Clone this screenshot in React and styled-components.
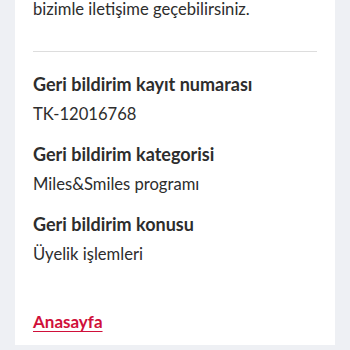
import React from 'react'
import styled, { createGlobalStyle } from 'styled-components'

const Global = createGlobalStyle`
  html, body {
    margin: 0;
    height: 100%;
    overflow: hidden;
    background: #eef0f4;
    font-family: 'Lato', 'Noto Sans', sans-serif;
    color: #2d2d2d;
  }
`

const Card = styled.div`
  margin: 0 15px;
  background: #ffffff;
  padding: 0 18px;
  height: 100vh;
  box-sizing: border-box;
`

const Intro = styled.p`
  margin: -5px 0 0;
  font-size: 16.6px;
  line-height: 28px;
  padding-bottom: 28px;
  border-bottom: 1px solid #dddddd;
`

const List = styled.dl`
  margin: 17px 0 0;
`

const Label = styled.dt`
  font-size: 18px;
  font-weight: 700;
  line-height: 30px;
  margin-top: 10px;
`

const Value = styled.dd`
  margin: 0;
  font-size: 16.6px;
  line-height: 30px;
`

const Link = styled.a`
  display: inline-block;
  margin-top: 42px;
  font-size: 17px;
  font-weight: 700;
  color: #d0103a;
  text-decoration: underline;
  text-underline-offset: 3px;
`

const items = [
  ['Geri bildirim kayıt numarası', 'TK-12016768'],
  ['Geri bildirim kategorisi', 'Miles&Smiles programı'],
  ['Geri bildirim konusu', 'Üyelik işlemleri'],
]

export default function App() {
  return (
    <>
      <Global />
      <Card>
        <Intro>bizimle iletişime geçebilirsiniz.</Intro>
        <List>
          {items.map(([label, value]) => (
            <React.Fragment key={label}>
              <Label>{label}</Label>
              <Value>{value}</Value>
            </React.Fragment>
          ))}
        </List>
        <Link href="#">Anasayfa</Link>
      </Card>
    </>
  )
}
